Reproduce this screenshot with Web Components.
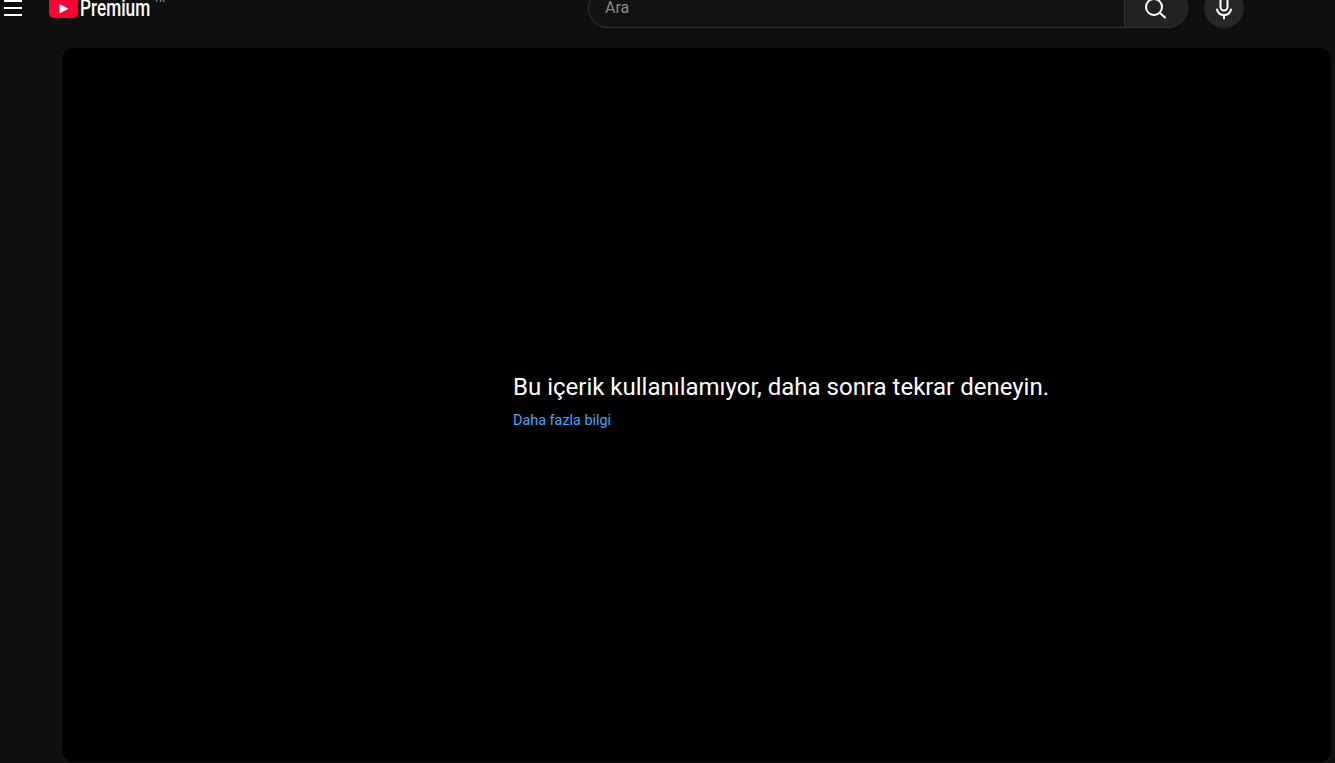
<!DOCTYPE html>
<html lang="tr">
<head>
<meta charset="utf-8">
<title>YouTube Premium</title>
<style>
  html, body { margin: 0; height: 100%; overflow: hidden; background: #0f0f0f; }
  body { font-family: Roboto, "Liberation Sans", sans-serif; }
</style>
</head>
<body>
<yt-page>
  <yt-masthead slot="header"></yt-masthead>
  <yt-player>
    <span slot="title">Bu içerik kullanılamıyor, daha sonra tekrar deneyin.</span>
    <a slot="link" href="#">Daha fazla bilgi</a>
  </yt-player>
</yt-page>

<script>
class YtPage extends HTMLElement {
  constructor() {
    super();
    const root = this.attachShadow({ mode: "open" });
    root.innerHTML = `
      <style>
        :host { display: flex; flex-direction: column; height: 763px; background: #0f0f0f; }
      </style>
      <slot name="header"></slot>
      <slot></slot>
    `;
  }
}

class YtLogo extends HTMLElement {
  constructor() {
    super();
    const root = this.attachShadow({ mode: "open" });
    root.innerHTML = `
      <style>
        :host { display: flex; align-items: center; height: 20px; margin-top: -2px; color: #fff; font-family: Roboto, sans-serif; }
        svg { display: block; width: 29px; height: 21px; flex: none; }
        .name {
          display: block; width: 70px; margin: 3px 0 0 2px;
          font-size: 23px; line-height: 21px; font-weight: 500;
          transform: scaleX(.75); transform-origin: left center;
          white-space: nowrap;
        }
        .cc { font-size: 9px; line-height: 9px; color: #aaa; margin-left: 4px; align-self: flex-start; margin-top: -2px; }
      </style>
      <svg viewBox="0 0 29 21"><path fill="#ff0033" d="M5 0h19a5 5 0 0 1 5 5v11a5 5 0 0 1-5 5H5a5 5 0 0 1-5-5V5a5 5 0 0 1 5-5z"/><path fill="#fff" d="M10.500 7v9.500l9-4.750z"/></svg>
      <span class="name">Premium</span>
      <span class="cc">TR</span>
    `;
  }
}

class YtSearch extends HTMLElement {
  constructor() {
    super();
    const root = this.attachShadow({ mode: "open" });
    root.innerHTML = `
      <style>
        :host { display: flex; height: 40px; box-sizing: border-box; font-family: Roboto, sans-serif; }
        .field {
          flex: 1; box-sizing: border-box; padding: 0 0 2px 16px;
          display: flex; align-items: center;
          background: #121212; border: 1px solid #303030; border-right: 0;
          border-radius: 20px 0 0 20px;
          color: #888; font-size: 16px;
        }
        .btn {
          width: 64px; box-sizing: border-box; display: flex; align-items: center; justify-content: center;
          background: #222; border: 1px solid #303030; border-radius: 0 20px 20px 0;
        }
        svg { width: 24px; height: 24px; display: block; margin-right: 2px; }
      </style>
      <div class="field">Ara</div>
      <div class="btn">
        <svg viewBox="0 0 24 24" fill="none" stroke="#fff" stroke-width="2" stroke-linecap="round"><circle cx="11" cy="11" r="8"/><path d="M17 17l5 4.500"/></svg>
      </div>
    `;
  }
}

class YtMasthead extends HTMLElement {
  constructor() {
    super();
    const root = this.attachShadow({ mode: "open" });
    root.innerHTML = `
      <style>
        :host {
          display: grid; grid-template-columns: 588px 600px 40px;
          align-items: center; height: 56px; margin-top: -20px; flex: none;
        }
        .start { display: flex; align-items: center; padding-left: 4px; }
        .menu { width: 18px; height: 16px; margin-right: 27px; display: flex; flex-direction: column; justify-content: space-between; }
        .menu i { display: block; height: 2px; background: #fff; }
        .mic {
          width: 40px; height: 40px; margin-left: 16px; border-radius: 50%; background: #272727;
          display: flex; align-items: center; justify-content: center;
        }
        .mic svg { width: 24px; height: 24px; display: block; }
      </style>
      <div class="start">
        <div class="menu"><i></i><i></i><i></i></div>
        <yt-logo></yt-logo>
      </div>
      <yt-search></yt-search>
      <div class="mic">
        <svg viewBox="0 0 24 24" fill="none" stroke="#fff" stroke-width="2" stroke-linecap="round"><rect x="8.500" y="1" width="7" height="13.500" rx="3.500"/><path d="M5 13.500c.8 3.500 3.600 5.500 7 5.500s6.200-2 7-5.500M12 19v3.500"/></svg>
      </div>
    `;
  }
}

class YtPlayer extends HTMLElement {
  constructor() {
    super();
    const root = this.attachShadow({ mode: "open" });
    root.innerHTML = `
      <style>
        :host {
          display: flex; align-items: center; flex: none;
          height: 714px; margin: 12px 4px 0 62px; padding: 0 0 8px 451px; box-sizing: border-box;
          background: #000; border-radius: 12px;
          font-family: Roboto, sans-serif;
        }
        .title { color: #fff; font-size: 24px; line-height: 30px; white-space: nowrap; }
        .link { margin-top: 10px; font-size: 14.4px; line-height: 18px; }
        ::slotted(a) { color: #3ea6ff; text-decoration: none; }
      </style>
      <div>
        <div class="title"><slot name="title"></slot></div>
        <div class="link"><slot name="link"></slot></div>
      </div>
    `;
  }
}

customElements.define("yt-page", YtPage);
customElements.define("yt-logo", YtLogo);
customElements.define("yt-search", YtSearch);
customElements.define("yt-masthead", YtMasthead);
customElements.define("yt-player", YtPlayer);
</script>
</body>
</html>
